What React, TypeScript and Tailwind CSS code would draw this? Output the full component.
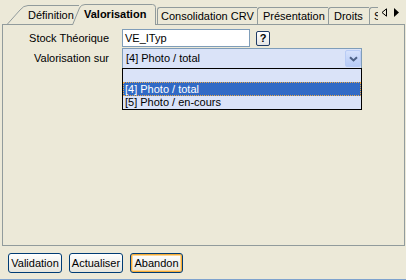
import React from 'react';

const font = "font-['Liberation_Sans',Arial,sans-serif]";

const PlainTab: React.FC<{ label: string; className: string }> = ({ label, className }) => (
  <div
    className={`h-[17px] mb-[1px] shrink-0 border-l border-t border-[#919B9C] rounded-tl-[3px] flex items-center pt-[1px] whitespace-nowrap ${className}`}
  >
    {label}
  </div>
);

const ArrowButton: React.FC = () => (
  <div className="w-[16px] h-[17px] shrink-0 rounded-[2px] border border-[#B9CCF5] bg-gradient-to-b from-[#D6E2FC] to-[#B7CBF6] flex items-center justify-center">
    <svg width="9" height="6" viewBox="0 0 9 6">
      <path d="M1 1.2 L4.5 4.5 L8 1.2" fill="none" stroke="#4D6185" strokeWidth="2" />
    </svg>
  </div>
);

const XpButton: React.FC<{ label: string; className: string; focused?: boolean }> = ({ label, className, focused }) => (
  <button
    className={`h-[20px] ${className} rounded-[3px] border border-[#003C74] bg-gradient-to-b from-white to-[#E6E5DD] text-[11px] leading-none text-black flex items-center justify-center ${
      focused ? 'shadow-[inset_0_0_0_1px_#F5AC3A,inset_0_0_0_2px_#FCD898]' : ''
    }`}
  >
    {label}
  </button>
);

export default function App() {
  return (
    <div className={`w-[406px] h-[280px] bg-[#ECE9D8] text-black text-[11px] flex flex-col overflow-hidden ${font}`}>
      {/* tab strip */}
      <div className="relative z-10 h-[25px] -mb-[1px] flex items-end">
        <div className="flex items-end h-full w-[378px] overflow-hidden pl-[7px] shrink-0">
          <div className="relative h-[19px] w-[72px] mb-[1px] shrink-0">
            <svg className="absolute inset-0" width="72" height="19" viewBox="0 0 72 19">
              <path d="M0.5 19 L13 5 Q16.5 0.5 21 0.5 L72 0.5" fill="none" stroke="#919B9C" />
            </svg>
            <div className="relative h-full flex items-center pl-[21px] pt-[2px]">Définition</div>
          </div>
          <div className="relative -ml-[7px] h-[21px] w-[84px] shrink-0">
            <svg className="absolute inset-0" width="84" height="21" viewBox="0 0 84 21">
              <path
                d="M0.5 21 L7.5 4 Q9 0.5 13 0.5 L80.5 0.5 Q83.5 0.5 83.5 3.5 L83.5 21"
                fill="#ECE9D8"
                stroke="#919B9C"
              />
            </svg>
            <div className="relative h-full flex items-center pl-[12px] font-bold">Valorisation</div>
          </div>
          <PlainTab label="Consolidation CRV" className="ml-[1px] w-[100px] pl-[3px]" />
          <PlainTab label="Présentation" className="w-[71px] pl-[5px]" />
          <PlainTab label="Droits" className="w-[41px] pl-[5px]" />
          <PlainTab label="Stocks" className="w-[40px] pl-[4px]" />
        </div>
        <div className="h-full w-[28px] flex items-start pt-[8px] pl-[3px] gap-[5px]">
          <svg width="7" height="9" viewBox="0 0 7 9">
            <path d="M5.5 0.8 L1 4.5 L5.5 8.2 Z" fill="none" stroke="#000" />
          </svg>
          <svg width="7" height="9" viewBox="0 0 7 9">
            <path d="M1 0 L6 4.5 L1 9 Z" fill="#000" />
          </svg>
        </div>
      </div>

      {/* panel */}
      <div className="ml-[2px] w-[403px] h-[222px] shrink-0 border border-[#919B9C] pt-[4px]">
        <div className="flex items-center h-[18px]">
          <div className="w-[106px] text-right">Stock Théorique</div>
          <div className="ml-[13px] w-[128px] h-[18px] border border-[#7F9DB9] bg-white flex items-center pl-[2px]">
            VE_ITyp
          </div>
          <div className="ml-[6px] w-[14px] h-[15px] rounded-[2px] border border-[#1F3B66] bg-gradient-to-b from-white to-[#E4E4E4] flex items-center justify-center font-bold text-[11px]">
            ?
          </div>
        </div>

        <div className="flex items-start mt-[1px]">
          <div className="w-[106px] h-[21px] leading-[21px] text-right">Valorisation sur</div>
          <div className="relative ml-[13px] w-[240px] h-[21px]">
            <div className="h-full border border-[#7F9DB9] bg-[#DAE3F8] flex items-center">
              <div className="flex-1 pl-[3px]">[4] Photo / total</div>
              <ArrowButton />
            </div>
            <div className="absolute top-[20px] left-0 w-[240px] h-[42px] border border-black bg-[#DAE3F8] flex flex-col">
              <div className="h-[13px]" />
              <div className="h-[14px] bg-[#316AC5] text-white border border-dotted border-[#E9A84A] pl-[1px] flex items-center">
                [4] Photo / total
              </div>
              <div className="h-[13px] pl-[2px] flex items-center">[5] Photo / en-cours</div>
            </div>
          </div>
        </div>
      </div>

      {/* buttons */}
      <div className="mt-[7px] pl-[8px] flex gap-[7px] shrink-0">
        <XpButton label="Validation" className="w-[54px]" />
        <XpButton label="Actualiser" className="w-[54px]" />
        <XpButton label="Abandon" className="w-[53px]" focused />
      </div>

      <div className="mt-[6px] h-[1px] bg-[#7DA2CE] shrink-0" />
    </div>
  );
}
